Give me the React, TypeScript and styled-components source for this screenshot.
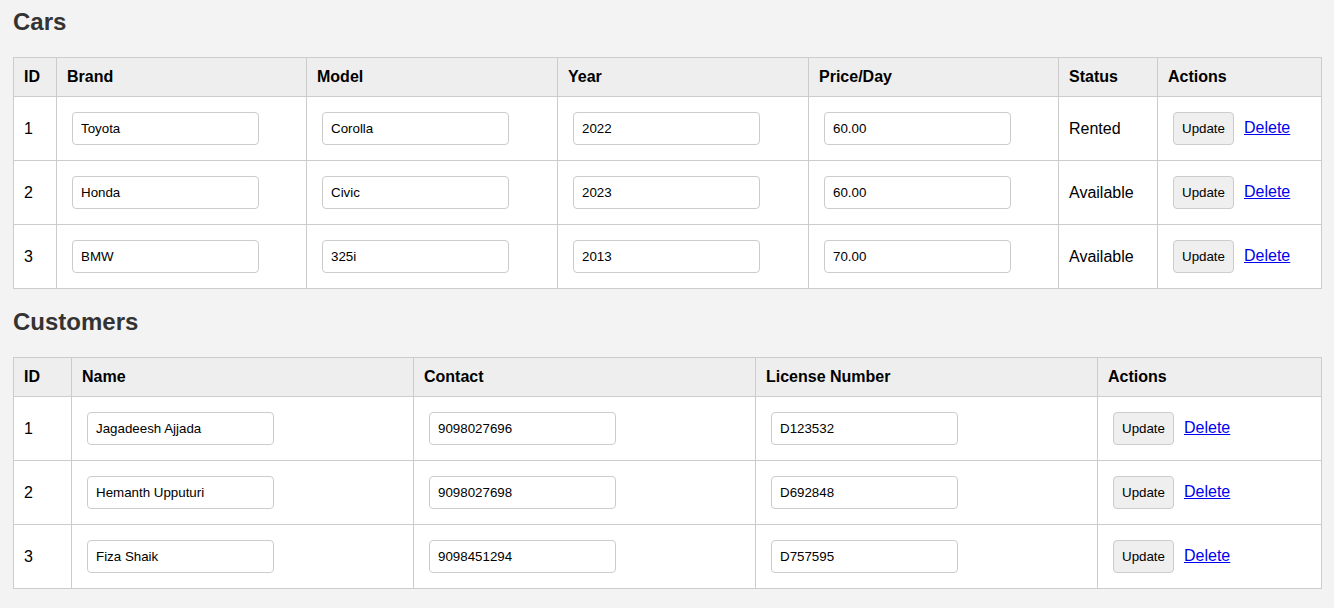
import React from "react";
import styled, { createGlobalStyle } from "styled-components";

const GlobalStyle = createGlobalStyle`
  html, body { margin: 0; padding: 0; background: #f3f3f3; }
  body { font-family: "Liberation Sans", Arial, sans-serif; color: #000; }
`;

const Page = styled.div`
  padding: 8px 12px 20px 13px;
`;

const Heading = styled.h2<{ $first?: boolean }>`
  font-size: 24px;
  font-weight: bold;
  color: #333;
  margin: ${(p) => (p.$first ? "0" : "19px")} 0 21px;
  line-height: 28px;
`;

const Table = styled.table`
  width: 100%;
  border-collapse: collapse;
  table-layout: fixed;
  background: #fff;
`;

const Th = styled.th`
  background: #eee;
  border: 1px solid #ccc;
  padding: 10px;
  text-align: left;
  font-size: 16px;
  font-weight: bold;
  line-height: 18px;
`;

const Td = styled.td`
  border: 1px solid #ccc;
  padding: 10px;
  font-size: 16px;
  height: 43px;
  vertical-align: middle;
  line-height: 18px;
`;

const Field = styled.input`
  box-sizing: border-box;
  width: 187px;
  height: 33px;
  margin: 0 5px;
  padding: 0 8px;
  border: 1px solid #ccc;
  border-radius: 4px;
  font-family: "Liberation Sans", Arial, sans-serif;
  font-size: 13.33px;
  color: #000;
  background: #fff;
  vertical-align: middle;
`;

const Actions = styled.div`
  display: flex;
  align-items: center;
  gap: 10px;
  padding-left: 5px;
`;

const UpdateButton = styled.button`
  box-sizing: border-box;
  height: 33px;
  padding: 0 8px;
  border: 1px solid #ccc;
  border-radius: 4px;
  background: #efefef;
  font-family: "Liberation Sans", Arial, sans-serif;
  font-size: 13.33px;
  color: #000;
`;

const DeleteLink = styled.a`
  color: #0000ee;
  text-decoration: underline;
  font-size: 16px;
  cursor: pointer;
  margin-top: -2px;
`;

const cars = [
  { id: 1, brand: "Toyota", model: "Corolla", year: "2022", price: "60.00", status: "Rented" },
  { id: 2, brand: "Honda", model: "Civic", year: "2023", price: "60.00", status: "Available" },
  { id: 3, brand: "BMW", model: "325i", year: "2013", price: "70.00", status: "Available" },
];

const customers = [
  { id: 1, name: "Jagadeesh Ajjada", contact: "9098027696", license: "D123532" },
  { id: 2, name: "Hemanth Upputuri", contact: "9098027698", license: "D692848" },
  { id: 3, name: "Fiza Shaik", contact: "9098451294", license: "D757595" },
];

const RowActions = () => (
  <Actions>
    <UpdateButton>Update</UpdateButton>
    <DeleteLink>Delete</DeleteLink>
  </Actions>
);

export default function App() {
  return (
    <Page>
      <GlobalStyle />
      <Heading $first>Cars</Heading>
      <Table>
        <colgroup>
          <col style={{ width: 43 }} />
          <col style={{ width: 250 }} />
          <col style={{ width: 251 }} />
          <col style={{ width: 251 }} />
          <col style={{ width: 250 }} />
          <col style={{ width: 99 }} />
          <col style={{ width: 164 }} />
        </colgroup>
        <thead>
          <tr>
            <Th>ID</Th>
            <Th>Brand</Th>
            <Th>Model</Th>
            <Th>Year</Th>
            <Th>Price/Day</Th>
            <Th>Status</Th>
            <Th>Actions</Th>
          </tr>
        </thead>
        <tbody>
          {cars.map((c) => (
            <tr key={c.id}>
              <Td>{c.id}</Td>
              <Td><Field defaultValue={c.brand} /></Td>
              <Td><Field defaultValue={c.model} /></Td>
              <Td><Field defaultValue={c.year} /></Td>
              <Td><Field defaultValue={c.price} /></Td>
              <Td>{c.status}</Td>
              <Td><RowActions /></Td>
            </tr>
          ))}
        </tbody>
      </Table>
      <Heading>Customers</Heading>
      <Table>
        <colgroup>
          <col style={{ width: 58 }} />
          <col style={{ width: 342 }} />
          <col style={{ width: 342 }} />
          <col style={{ width: 342 }} />
          <col style={{ width: 224 }} />
        </colgroup>
        <thead>
          <tr>
            <Th>ID</Th>
            <Th>Name</Th>
            <Th>Contact</Th>
            <Th>License Number</Th>
            <Th>Actions</Th>
          </tr>
        </thead>
        <tbody>
          {customers.map((c) => (
            <tr key={c.id}>
              <Td>{c.id}</Td>
              <Td><Field defaultValue={c.name} /></Td>
              <Td><Field defaultValue={c.contact} /></Td>
              <Td><Field defaultValue={c.license} /></Td>
              <Td><RowActions /></Td>
            </tr>
          ))}
        </tbody>
      </Table>
    </Page>
  );
}
